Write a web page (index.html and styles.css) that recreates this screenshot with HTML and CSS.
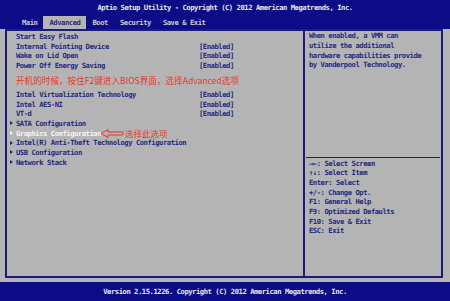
FILE: index.html
```html
<!DOCTYPE html>
<html lang="zh-CN">
<head>
    <meta charset="UTF-8">
    <title>Aptio Setup Utility</title>
    <link rel="stylesheet" href="styles.css">
</head>
<body>
    <header class="top">
        <div class="title">Aptio Setup Utility - Copyright (C) 2012 American Megatrends, Inc.</div>
        <nav class="tabs">
            <span class="tab">Main</span>
            <span class="tab active">Advanced</span>
            <span class="tab">Boot</span>
            <span class="tab">Security</span>
            <span class="tab">Save &amp; Exit</span>
        </nav>
    </header>

    <main class="frame">
        <section class="items">
            <div class="row"><span>Start Easy Flash</span></div>
            <div class="row"><span>Internal Pointing Device</span><span>[Enabled]</span></div>
            <div class="row"><span>Wake on Lid Open</span><span>[Enabled]</span></div>
            <div class="row"><span>Power Off Energy Saving</span><span>[Enabled]</span></div>
            <div class="note">开机的时候，按住F2键进入BIOS界面，选择Advanced选项</div>
            <div class="row"><span>Intel Virtualization Technology</span><span>[Enabled]</span></div>
            <div class="row"><span>Intel AES-NI</span><span>[Enabled]</span></div>
            <div class="row"><span>VT-d</span><span>[Enabled]</span></div>
            <div class="row sub"><span>SATA Configuration</span></div>
            <div class="row sub selected">
                <span class="pick">Graphics Configuration</span>
                <svg class="hint-arrow" width="24" height="9" viewBox="0 0 24 9">
                    <polygon points="1,4.5 8,0.6 8,3 23,3 23,6 8,6 8,8.4" fill="none" stroke="#e5392b" stroke-width="1"/>
                </svg>
                <span class="hint">选择此选项</span>
            </div>
            <div class="row sub"><span>Intel(R) Anti-Theft Technology Configuration</span></div>
            <div class="row sub"><span>USB Configuration</span></div>
            <div class="row sub"><span>Network Stack</span></div>
        </section>

        <aside class="help">
            <div class="help-desc">
                <p>When enabled, a VMM can</p>
                <p>utilize the additional</p>
                <p>hardware capabilities provide</p>
                <p>by Vanderpool Technology.</p>
            </div>
            <div class="help-keys">
                <p>→←: Select Screen</p>
                <p>↑↓: Select Item</p>
                <p>Enter: Select</p>
                <p>+/-: Change Opt.</p>
                <p>F1: General Help</p>
                <p>F9: Optimized Defaults</p>
                <p>F10: Save &amp; Exit</p>
                <p>ESC: Exit</p>
            </div>
        </aside>
    </main>

    <footer class="bottom">Version 2.15.1226. Copyright (C) 2012 American Megatrends, Inc.</footer>
</body>
</html>
```

FILE: styles.css
```css
* {
    margin: 0;
    padding: 0;
    box-sizing: border-box;
}

body {
    width: 450px;
    height: 301px;
    overflow: hidden;
    background-color: #b4b4b4;
    color: #1f2a82;
    font-family: "DejaVu Sans Mono", "Liberation Mono", monospace;
    font-size: 7.2px;
    font-weight: bold;
    letter-spacing: -0.46px;
    display: flex;
    flex-direction: column;
}

.top {
    background-color: #0c0c86;
    height: 29px;
}

.title {
    height: 16px;
    line-height: 16px;
    text-align: center;
    color: #e6e6ea;
}

.tabs {
    display: flex;
    height: 13px;
    padding-left: 16px;
}

.tab {
    padding: 0 6px;
    line-height: 13px;
    color: #c9c9d4;
    white-space: pre;
}

.tab.active {
    background-color: #b4b4b4;
    color: #1f2a82;
}

.frame {
    height: 249px;
    margin: 0 7px 0 5px;
    border: 2px solid #1a1a80;
    display: grid;
    grid-template-columns: 1fr 138px;
}

.items {
    padding-top: 1.2px;
    padding-left: 9px;
}

.row {
    display: grid;
    grid-template-columns: 183px auto;
    height: 9.65px;
    line-height: 9.65px;
    white-space: pre;
}

.row.sub > span:first-child::before {
    content: "";
    display: inline-block;
    margin-left: -6px;
    margin-right: 3px;
    border-left: 3px solid #1f2a82;
    border-top: 2px solid transparent;
    border-bottom: 2px solid transparent;
    vertical-align: 0.5px;
}

.row.selected {
    display: flex;
    align-items: center;
}

.row.selected .pick {
    color: #f4f4f4;
}

.row.selected > span.pick::before {
    border-left-color: #f4f4f4;
}

.hint-arrow {
    margin-left: -1px;
    flex: none;
}

.hint {
    color: #e5392b;
    font-family: "Noto Sans CJK SC", sans-serif;
    font-size: 8.5px;
    font-weight: normal;
    letter-spacing: 0;
    line-height: 9.65px;
    margin-left: 1px;
}

.note {
    height: 19.3px;
    line-height: 19.3px;
    color: #e5392b;
    font-family: "Noto Sans CJK SC", sans-serif;
    font-size: 8.6px;
    font-weight: normal;
    letter-spacing: 0;
    white-space: pre;
}

.help {
    border-left: 2px solid #1a1a80;
    display: flex;
    flex-direction: column;
}

.help p {
    height: 9.65px;
    line-height: 9.65px;
    white-space: pre;
}

.help-desc {
    height: 126px;
    padding: 0.4px 0 0 4px;
}

.help-keys {
    margin: 0 1px;
    border-top: 1.5px solid #1a1a80;
    padding: 0.8px 0 0 3px;
}

.bottom {
    margin-top: 4px;
    height: 19px;
    line-height: 19px;
    background-color: #0c0c86;
    color: #e6e6ea;
    text-align: center;
}
```
